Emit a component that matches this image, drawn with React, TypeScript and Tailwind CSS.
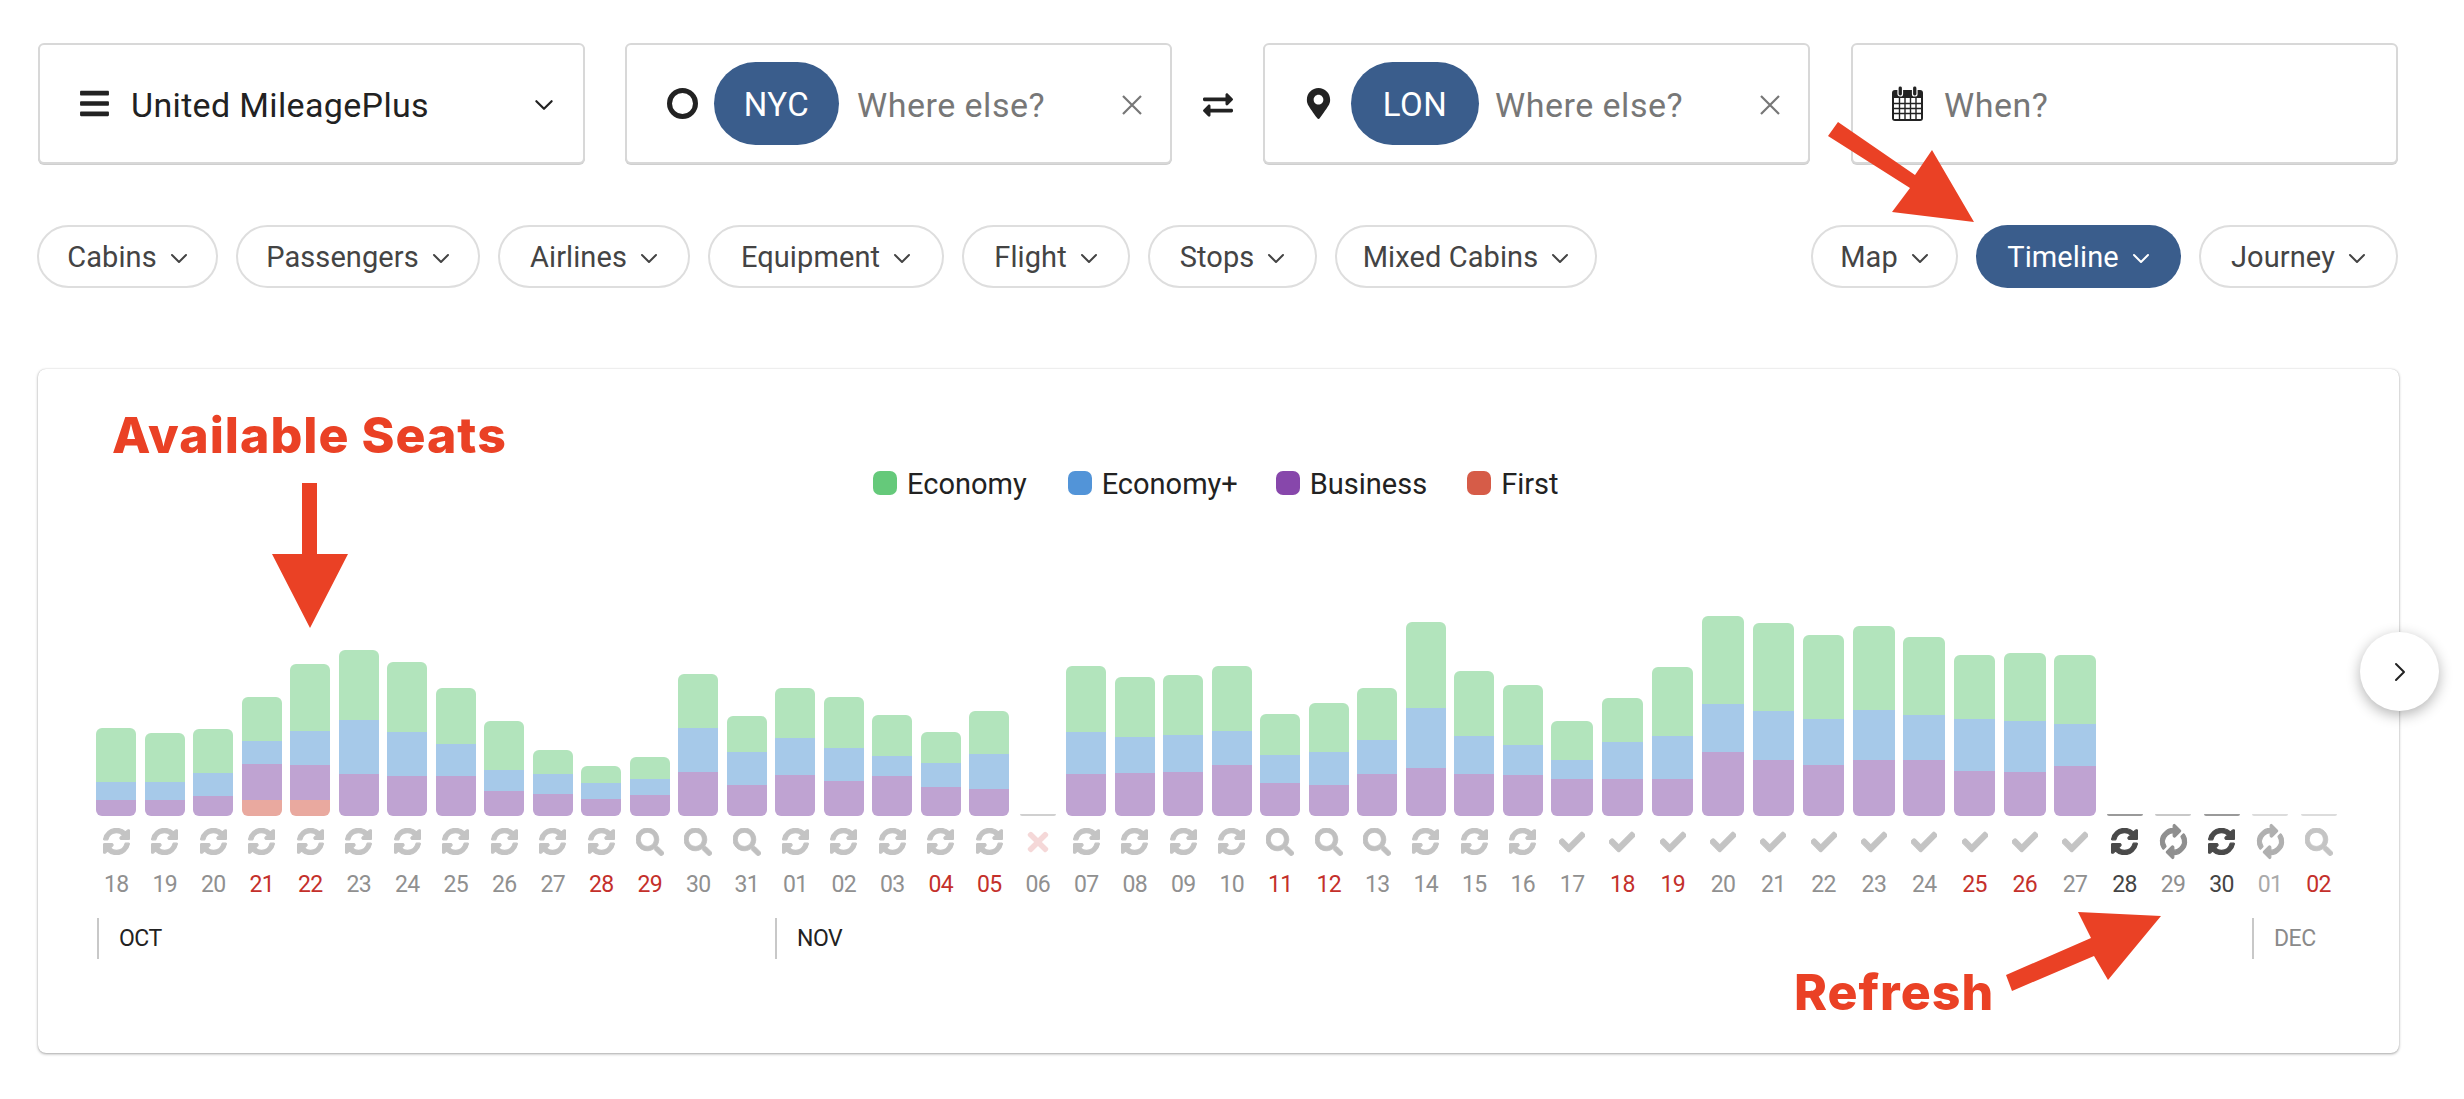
import React from "react";
import { FaBars, FaCheck, FaExchangeAlt, FaMapMarkerAlt, FaSearch, FaSyncAlt, FaTimes } from "react-icons/fa";

const Chevron = ({ w = 18, h = 11, stroke = "#444", sw = 2 }: { w?: number; h?: number; stroke?: string; sw?: number }) => (
  <svg width={w} height={h} viewBox="0 0 18 11" fill="none" className="shrink-0">
    <path d="M2 2 L9 9 L16 2" stroke={stroke} strokeWidth={sw} strokeLinecap="round" strokeLinejoin="round" />
  </svg>
);

const Cross = () => (
  <svg width="22" height="22" viewBox="0 0 22 22" fill="none" className="shrink-0">
    <path d="M2 2 L20 20 M20 2 L2 20" stroke="#777" strokeWidth="2.2" />
  </svg>
);

const Calendar = () => (
  <svg width="33" height="37" viewBox="0 0 33 37" className="shrink-0">
    <rect x="1" y="5" width="31" height="31" rx="3" fill="#222" />
    <rect x="7" y="1" width="4.5" height="10" rx="2" fill="#222" stroke="#fff" strokeWidth="1.2" />
    <rect x="21.5" y="1" width="4.5" height="10" rx="2" fill="#222" stroke="#fff" strokeWidth="1.2" />
    <rect x="3" y="13" width="27" height="21" fill="#fff" />
    <path d="M3 18.5H30 M3 23.5H30 M3 28.5H30 M8.5 13V34 M14 13V34 M19.5 13V34 M25 13V34" stroke="#222" strokeWidth="1.4" />
  </svg>
);

const Pill = ({ label, cls, active }: { label: string; cls: string; active?: boolean }) => (
  <div
    className={`${cls} h-[63px] pt-[3px] rounded-full flex items-center justify-center gap-[13px] text-[29px] tracking-[0.1px] ${
      active ? "bg-[#3a5d8c] text-white" : "border-2 border-[#dedede] bg-white text-[#444]"
    }`}
  >
    <span>{label}</span>
    <Chevron stroke={active ? "#fff" : "#444"} />
  </div>
);

const Code = ({ label, cls }: { label: string; cls: string }) => (
  <div className={`${cls} h-[83px] pt-[3px] rounded-full bg-[#3a5d8c] text-white text-[33px] tracking-[0.5px] flex items-center justify-center shrink-0`}>
    {label}
  </div>
);

const Legend = ({ color, label, cls }: { color: string; label: string; cls: string }) => (
  <div className={`${cls} flex items-center gap-[10px]`}>
    <span className={`${color} w-[24px] h-[24px] rounded-[7px]`} />
    <span className="pt-[1px] text-[29px] leading-[24px] text-[#222]">{label}</span>
  </div>
);

type Kind = "sync" | "syncDark" | "spin" | "spinLight" | "search" | "check" | "x" | "searchLight";
type Tone = "n" | "w" | "d" | "m" | "l";
type Col = { d: string; t: number; b: number; p: number; kind: Kind; tone: Tone; red?: number; line?: string; wide?: boolean };

const C = (d: string, t: number, b: number, p: number, kind: Kind, tone: Tone = "n", red?: number): Col => ({ d, t, b, p, kind, tone, red });

const cols: Col[] = [
  C("18", 387, 549, 603, "sync"),
  C("19", 402, 549, 603, "sync"),
  C("20", 390, 522, 591, "sync"),
  C("21", 294, 426, 495, "sync", "w", 603),
  C("22", 195, 396, 498, "sync", "w", 603),
  C("23", 153, 363, 525, "sync"),
  C("24", 189, 399, 531, "sync"),
  C("25", 267, 435, 531, "sync"),
  C("26", 366, 513, 576, "sync"),
  C("27", 453, 525, 585, "sync"),
  C("28", 501, 552, 600, "sync", "w"),
  C("29", 474, 540, 588, "search", "w"),
  C("30", 225, 387, 519, "search"),
  C("31", 351, 459, 558, "search"),
  C("01", 267, 417, 528, "sync"),
  C("02", 294, 447, 546, "sync"),
  C("03", 348, 471, 531, "sync"),
  C("04", 399, 492, 564, "sync", "w"),
  C("05", 336, 465, 570, "sync", "w"),
  { ...C("06", 650, 650, 650, "x"), line: "bg-[#d0d0d0]" },
  C("07", 201, 399, 525, "sync"),
  C("08", 234, 414, 522, "sync"),
  C("09", 228, 408, 519, "sync"),
  C("10", 201, 396, 498, "sync"),
  C("11", 345, 468, 552, "search", "w"),
  C("12", 312, 459, 558, "search", "w"),
  C("13", 267, 423, 525, "search"),
  C("14", 69, 327, 507, "sync"),
  C("15", 216, 411, 525, "sync"),
  C("16", 258, 438, 528, "sync"),
  ...[
    C("17", 366, 483, 540, "check"),
    C("18", 297, 429, 540, "check", "w"),
    C("19", 204, 411, 540, "check", "w"),
    C("20", 51, 315, 459, "check"),
    C("21", 72, 336, 483, "check"),
    C("22", 108, 360, 498, "check"),
    C("23", 81, 333, 483, "check"),
    C("24", 114, 348, 483, "check"),
    C("25", 168, 360, 516, "check", "w"),
    C("26", 162, 366, 519, "check", "w"),
    C("27", 168, 375, 501, "check"),
  ].map((c) => ({ ...c, wide: true })),
  { ...C("28", 650, 650, 650, "syncDark", "d"), line: "bg-[#9a9a9a]" },
  { ...C("29", 650, 650, 650, "spin", "m"), line: "bg-[#c8c8c8]" },
  { ...C("30", 650, 650, 650, "syncDark", "d"), line: "bg-[#9a9a9a]" },
  { ...C("01", 650, 650, 650, "spinLight", "l"), line: "bg-[#dcdcdc]" },
  { ...C("02", 650, 650, 650, "searchLight", "w"), line: "bg-[#dcdcdc]" },
];

const toneCls: Record<Tone, string> = {
  n: "text-[#909090]",
  w: "text-[#c4302b]",
  d: "text-[#444]",
  m: "text-[#8f8f8f]",
  l: "text-[#aaa]",
};

const StatusIcon = ({ kind }: { kind: Kind }) => {
  switch (kind) {
    case "sync":
      return <FaSyncAlt size={27} stroke="currentColor" strokeWidth={24} className="text-[#c4c4c4]" />;
    case "syncDark":
      return <FaSyncAlt size={27} stroke="currentColor" strokeWidth={24} className="text-[#4a4a4a]" />;
    case "spin":
      return <FaSyncAlt size={27} stroke="currentColor" strokeWidth={24} className="text-[#8f8f8f] -rotate-45" />;
    case "spinLight":
      return <FaSyncAlt size={27} stroke="currentColor" strokeWidth={24} className="text-[#b0b0b0] -rotate-45" />;
    case "search":
      return <FaSearch size={28} stroke="currentColor" strokeWidth={16} className="text-[#c0c0c0]" />;
    case "searchLight":
      return <FaSearch size={28} stroke="currentColor" strokeWidth={16} className="text-[#c4c4c4]" />;
    case "check":
      return <FaCheck size={26} stroke="currentColor" strokeWidth={24} className="text-[#c4c4c4]" />;
    case "x":
      return <FaTimes size={30} className="text-[#f5d8d8]" />;
  }
};

const Column = ({ c }: { c: Col }) => {
  const h = (y: number) => (650 - y) / 3;
  return (
    <div className={`${c.wide ? "w-[50.3px]" : "w-[48.5px]"} shrink-0 flex flex-col items-center`}>
      <div className="h-[320.5px] w-full flex flex-col justify-end items-center">
        {c.line ? (
          <div className={`${c.line} w-[36px] h-[2px] rounded-b-sm`} />
        ) : (
          <div className={`${c.wide ? "w-[41.5px]" : "w-[40px]"} rounded-[6px] overflow-hidden flex flex-col`}>
            <div className="bg-[#b2e4bc]" style={{ height: h(c.t) - h(c.b) }} />
            <div className="bg-[#a6c9e9]" style={{ height: h(c.b) - h(c.p) }} />
            <div className="bg-[#bfa3d2]" style={{ height: c.red ? h(c.p) - h(c.red) : h(c.p) }} />
            {c.red ? <div className="bg-[#e9a99f]" style={{ height: h(c.red) }} /> : null}
          </div>
        )}
      </div>
      <div className="mt-[13px] h-[26px] flex items-center justify-center">
        <StatusIcon kind={c.kind} />
      </div>
      <div className={`mt-[16.5px] h-[28px] leading-[28px] text-[23px] tracking-[-0.6px] ${toneCls[c.tone]}`}>{c.d}</div>
    </div>
  );
};

const Month = ({ label, cls, text }: { label: string; cls: string; text: string }) => (
  <div className={`${cls} h-[41px] border-l-2 border-[#c8c8c8] pl-[20px] pt-[2px] flex items-center text-[23px] tracking-[-0.5px] ${text}`}>{label}</div>
);

const boxCls = "w-[547px] h-[121px] rounded-[6px] border-2 border-[#d8d8d8] shadow-[0_1px_0_#cfcfcf] bg-white flex items-center shrink-0";

export default function App() {
  return (
    <div className="relative w-[2464px] h-[1099px] overflow-hidden bg-white font-[Roboto,sans-serif] pl-[38px] pt-[43px]">
      {/* search row */}
      <div className="flex items-center">
        <div className={`${boxCls} pl-[38px] pr-[29px]`}>
          <FaBars size={33} className="text-[#222] shrink-0" />
          <span className="ml-[20px] pt-[3px] text-[34px] text-[#222] tracking-[0.35px]">United MileagePlus</span>
          <span className="ml-auto pt-[3px]"><Chevron w={20} h={12} stroke="#222" /></span>
        </div>
        <div className={`${boxCls} ml-[40px] pl-[40px] pr-[27px]`}>
          <span className="w-[31px] h-[31px] rounded-full border-[5px] border-[#222] shrink-0" />
          <Code label="NYC" cls="w-[125px] ml-[16px]" />
          <span className="ml-[18px] pt-[3px] text-[34px] text-[#777] tracking-[0.5px]">Where else?</span>
          <span className="ml-auto pt-[2px]"><Cross /></span>
        </div>
        <div className="w-[91px] pt-[2px] flex justify-center shrink-0">
          <FaExchangeAlt size={30} className="text-[#222]" />
        </div>
        <div className={`${boxCls} pl-[38px] pr-[27px]`}>
          <FaMapMarkerAlt size={31} className="text-[#222] shrink-0" />
          <Code label="LON" cls="w-[128px] ml-[17px]" />
          <span className="ml-[16px] pt-[3px] text-[34px] text-[#777] tracking-[0.5px]">Where else?</span>
          <span className="ml-auto pt-[2px]"><Cross /></span>
        </div>
        <div className={`${boxCls} ml-[41px] pl-[38px]`}>
          <Calendar />
          <span className="ml-[20px] pt-[3px] text-[34px] text-[#777] tracking-[0.5px]">When?</span>
        </div>
      </div>

      {/* filter row */}
      <div className="mt-[61px] -ml-[1px] flex w-[2361px] items-center">
        <div className="flex gap-[18px]">
          <Pill label="Cabins" cls="w-[181px]" />
          <Pill label="Passengers" cls="w-[244px]" />
          <Pill label="Airlines" cls="w-[192px]" />
          <Pill label="Equipment" cls="w-[236px]" />
          <Pill label="Flight" cls="w-[168px]" />
          <Pill label="Stops" cls="w-[169px]" />
          <Pill label="Mixed Cabins" cls="w-[262px]" />
        </div>
        <div className="ml-auto flex gap-[18px]">
          <Pill label="Map" cls="w-[147px]" />
          <Pill label="Timeline" cls="w-[205px]" active />
          <Pill label="Journey" cls="w-[199px]" />
        </div>
      </div>

      {/* card */}
      <div className="relative mt-[81px] w-[2361px] h-[684px] rounded-[8px] bg-white shadow-[0_1px_3px_rgba(0,0,0,0.35),0_0_1px_rgba(0,0,0,0.2)] pt-[102px] pl-[54px]">
        <div className="h-[24px] ml-[781px] flex items-center">
          <Legend color="bg-[#65c97a]" label="Economy" cls="mr-[41px]" />
          <Legend color="bg-[#5294d8]" label="Economy+" cls="mr-[38px]" />
          <Legend color="bg-[#8747ab]" label="Business" cls="mr-[40px]" />
          <Legend color="bg-[#d65c48]" label="First" />
        </div>
        <div className="flex">
          {cols.map((c, i) => (
            <Column key={i} c={c} />
          ))}
        </div>
        <div className="mt-[19px] ml-[5px] flex">
          <Month label="OCT" cls="w-[678px]" text="text-[#222]" />
          <Month label="NOV" cls="w-[1477px]" text="text-[#222]" />
          <Month label="DEC" cls="w-[100px]" text="text-[#8a8a8a]" />
        </div>
        <div className="absolute left-[2322px] top-[263px] w-[79px] h-[79px] rounded-full bg-white shadow-[0_4px_14px_rgba(0,0,0,0.3)] flex items-center justify-center">
          <svg width="12" height="20" viewBox="0 0 12 20" fill="none">
            <path d="M2 2 L10 10 L2 18" stroke="#222" strokeWidth="2" strokeLinecap="round" strokeLinejoin="round" />
          </svg>
        </div>
      </div>

      {/* annotations */}
      <svg className="absolute left-0 top-0 pointer-events-none" width="2464" height="1099" viewBox="0 0 2464 1099">
        <polygon fill="#ea4125" points="1838,122 1915,175 1932,150 1974,222 1892,212 1910,188 1828,136" />
        <polygon fill="#ea4125" points="302,483 317,483 317,554 348,554 310,628 272,554 302,554" />
        <polygon fill="#ea4125" points="2006,975 2091,938 2078,912 2161,916 2108,980 2094,956 2012,991" />
      </svg>
      <div className="absolute left-[112px] top-[405px] text-[50px] leading-[60px] font-extrabold tracking-[1px] text-[#ea4125] font-[Inter,sans-serif]">Available Seats</div>
      <div className="absolute left-[1794px] top-[962px] text-[50px] leading-[60px] font-extrabold tracking-[1px] text-[#ea4125] font-[Inter,sans-serif]">Refresh</div>
    </div>
  );
}
